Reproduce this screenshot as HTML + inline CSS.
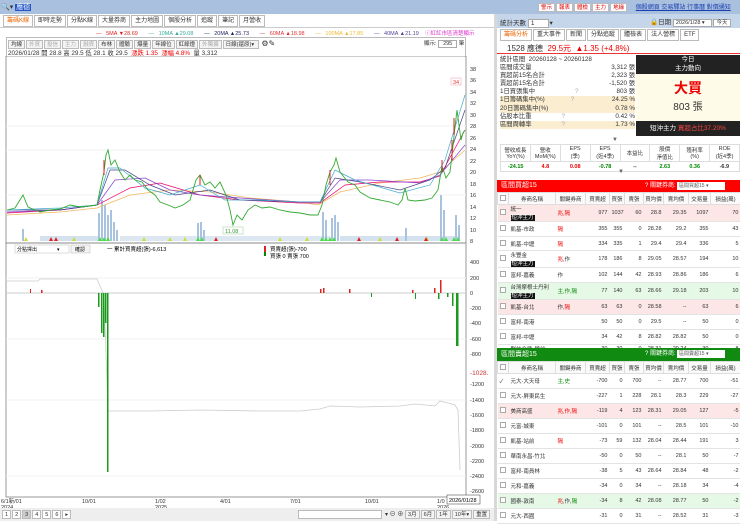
<!DOCTYPE html><html><head><meta charset="utf-8"><style>
*{margin:0;padding:0;box-sizing:border-box}
body{width:740px;height:521px;overflow:hidden;background:#fff;font-family:"Liberation Sans","Noto Sans CJK TC",sans-serif;font-size:6px;color:#333;position:relative}
.a{position:absolute}
.tab{display:inline-block;border:1px solid #bbb;padding:1px 3px;margin-right:1px;background:#fff;font-size:6px;height:12px;line-height:9px}
.btn{display:inline-block;border:1px solid #bbb;padding:0 2px;background:#f4f4f4;font-size:5.5px;height:9px;line-height:8px;margin-right:1px}
table{border-collapse:collapse;table-layout:fixed}
.t td{border-bottom:1px solid #e3e3e3;font-size:5.5px;text-align:right;padding:0 2px;white-space:nowrap;overflow:hidden}
.t td.l{text-align:left}
.t th{font-weight:normal;font-size:5.5px;border:1px solid #ddd;background:#fafafa;height:12px}
.cb{display:inline-block;width:6px;height:6px;border:1px solid #aaa;background:#fff}
.tag{background:#111;color:#fff;padding:0 1px}
.r{color:#e00}.g{color:#080}
</style></head><body>
<div class="a" style="left:0;top:0;width:740px;height:14px;background:#a9c1de"></div>
<div class="a" style="left:1px;top:2px;font-size:7px">🔍▾ <span style="background:#2456c8;color:#fff;padding:0 1px">應德</span></div>
<div class="a" style="left:538px;top:2px;font-size:6px">
<span class="btn" style="color:#d00;background:#fff">警示</span><span class="btn" style="color:#d00;background:#fff">報表</span><span class="btn" style="color:#d00;background:#fff">體檢</span><span class="btn" style="color:#d00;background:#fff">主力</span><span class="btn" style="color:#d00;background:#fff">地緣</span>
<span style="color:#1a3fb0;text-decoration:underline;margin-left:6px">個股網頁 交易驛站 行事曆 對價通知</span></div>
<div class="a" style="left:3px;top:15px"><span class="tab" style="color:#e60">籌碼K線</span><span class="tab">即時走勢</span><span class="tab">分點K線</span><span class="tab">大量券商</span><span class="tab">主力地圖</span><span class="tab">個股分析</span><span class="tab">追蹤</span><span class="tab">筆記</span><span class="tab">月營收</span></div>
<div class="a" style="left:0;top:27px;width:494px;border-top:1px solid #ccc"></div>
<div class="a" style="left:96px;top:29px;font-size:5.5px;white-space:nowrap">
<span style="color:#d22">— &nbsp; 5MA ▼28.69</span>&nbsp;&nbsp;&nbsp;&nbsp;&nbsp;&nbsp; <span style="color:#3a9">— &nbsp; 10MA ▲29.08</span>&nbsp;&nbsp;&nbsp;&nbsp;&nbsp;&nbsp; <span style="color:#226">— &nbsp; 20MA ▲25.73</span>&nbsp;&nbsp;&nbsp;&nbsp;&nbsp;&nbsp; <span style="color:#d33">— &nbsp; 60MA ▲18.98</span>&nbsp;&nbsp;&nbsp;&nbsp;&nbsp;&nbsp; <span style="color:#eb3">— &nbsp; 100MA ▲17.85</span>&nbsp;&nbsp;&nbsp;&nbsp;&nbsp;&nbsp; <span style="color:#549">— &nbsp; 40MA ▲21.19</span>&nbsp;&nbsp;&nbsp; <span style="color:#d3c">ⓘ紅紅市區清楚顯示</span></div>
<div class="a" style="left:6px;top:37px;width:460px;height:20px;border:1px solid #bbb;border-bottom:none"></div>
<div class="a" style="left:8px;top:39px"><span class="btn">均線</span><span class="btn" style="color:#aaa">外資</span><span class="btn" style="color:#aaa">投信</span><span class="btn" style="color:#aaa">主力</span><span class="btn" style="color:#aaa">融資</span><span class="btn">布林</span><span class="btn">體驗</span><span class="btn">爆量</span><span class="btn">年線位</span><span class="btn">紅綠燈</span><span class="btn" style="color:#aaa">外獨擴</span><span class="btn" style="width:36px">日線(還原)▾</span> <span style="font-size:8px">⚙✎</span></div>
<div class="a" style="left:424px;top:39px;font-size:5.5px">顯示: <span style="border:1px solid #aaa;padding:0 4px;background:#fff">295</span> 筆</div>
<div class="a" style="left:8px;top:48px;font-size:6.3px">2026/01/28 開 28.8 高 29.5 低 28.1 收 29.5 &nbsp;<span class="r">漲跌 1.35 &nbsp;漲幅 4.8%</span> &nbsp;量 3,312</div>
<svg class="a" style="left:0;top:56px" width="496" height="465" viewBox="0 56 496 465">
<rect x="6" y="56" width="460" height="441" fill="none" stroke="#999" stroke-width="1"/>
<line x1="6" y1="243" x2="466" y2="243" stroke="#888"/>
<g stroke="#f0f0f0">
<line x1="6" y1="126" x2="466" y2="126"/><line x1="6" y1="150" x2="466" y2="150"/><line x1="6" y1="195" x2="466" y2="195"/>
<line x1="6" y1="278" x2="466" y2="278"/><line x1="6" y1="339" x2="466" y2="339"/><line x1="6" y1="400" x2="466" y2="400"/><line x1="6" y1="476" x2="466" y2="476"/>
</g>
<g font-size="5.5" fill="#333">
<text x="470" y="71">38</text><text x="470" y="82">36</text><text x="470" y="94">34</text><text x="470" y="105">32</text><text x="470" y="117">30</text><text x="470" y="128">28</text><text x="470" y="140">26</text><text x="470" y="151">24</text><text x="470" y="163">22</text><text x="470" y="174">20</text><text x="470" y="186">18</text><text x="470" y="197">16</text><text x="470" y="209">14</text><text x="470" y="220">12</text><text x="470" y="232">10</text><text x="470" y="243">8</text>
<text x="470" y="264">400</text><text x="470" y="280">200</text><text x="470" y="295">0</text><text x="470" y="310">-200</text><text x="470" y="325">-400</text><text x="470" y="341">-600</text><text x="470" y="356">-800</text><text x="470" y="375" fill="#c33" font-size="6.5">-1028.</text><text x="470" y="386">-1200</text><text x="470" y="402">-1400</text><text x="470" y="417">-1600</text><text x="470" y="432">-1800</text><text x="470" y="448">-2000</text><text x="470" y="463">-2200</text><text x="470" y="478">-2400</text><text x="470" y="493">-2600</text>
<text x="1" y="503">6/1新/01</text><text x="1" y="509">2024</text><text x="82" y="503">10/01</text><text x="155" y="503">1/02</text><text x="155" y="509">2025</text><text x="220" y="503">4/01</text><text x="290" y="503">7/01</text><text x="365" y="503">10/01</text><text x="437" y="503">1/0</text><text x="437" y="509">2026</text>
</g>
<rect x="447" y="495" width="33" height="9" fill="#fff" stroke="#555" stroke-width=".6"/><text x="449" y="502" font-size="5.5">2026/01/28</text>
<rect x="451" y="78" width="10" height="7" fill="#fff" stroke="#e9a" stroke-width=".5"/><text x="453" y="84" font-size="5.5" fill="#e33">34</text>
<rect x="223" y="227" width="20" height="7" fill="#fff" stroke="#9c9" stroke-width=".5"/><text x="225" y="233" font-size="5.5" fill="#393">11.08</text>
<g fill="#a9c3de">
<rect x="22" y="229" width="2" height="12"/><rect x="98" y="213" width="2" height="28"/><rect x="101" y="200" width="2" height="41"/><rect x="104" y="205" width="2" height="36"/><rect x="107" y="215" width="2" height="26"/><rect x="110" y="210" width="2" height="31"/><rect x="113" y="222" width="2" height="19"/><rect x="116" y="230" width="2" height="11"/>
<rect x="197" y="223" width="2" height="18"/><rect x="200" y="222" width="2" height="19"/><rect x="203" y="230" width="2" height="11"/>
<rect x="322" y="212" width="2" height="29"/><rect x="325" y="220" width="2" height="21"/><rect x="331" y="218" width="2" height="23"/><rect x="334" y="215" width="2" height="26"/><rect x="337" y="222" width="2" height="19"/>
<rect x="405" y="228" width="2" height="13"/><rect x="440" y="195" width="2" height="46"/><rect x="443" y="210" width="2" height="31"/><rect x="455" y="215" width="2" height="26"/><rect x="458" y="225" width="2" height="16"/>
<rect x="40" y="236" width="60" height="5" opacity=".5"/><rect x="120" y="236" width="210" height="5" opacity=".4"/><rect x="340" y="236" width="120" height="5" opacity=".5"/>
</g>
<g fill="#4d4">
<path d="M98 241l2-4 2 4zM102 241l2-4 2 4zM106 241l2-4 2 4zM196 241l2-4 2 4zM200 241l2-4 2 4zM320 241l2-4 2 4zM324 241l2-4 2 4zM328 241l2-4 2 4zM332 241l2-4 2 4zM440 241l2-4 2 4zM444 241l2-4 2 4zM452 241l2-4 2 4zM456 241l2-4 2 4z"/>
</g>
<g fill="#cd3"><path d="M24 241l2-4 2 4zM72 241l2-4 2 4zM142 241l2-4 2 4zM168 241l2-4 2 4zM183 241l2-4 2 4zM278 241l2-4 2 4zM305 241l2-4 2 4zM378 241l2-4 2 4zM425 241l2-4 2 4z"/></g>
<g fill="#d22"><path d="M49 241l2-4 2 4zM54 241l2-4 2 4zM214 241l2-4 2 4zM357 241l2-4 2 4zM395 241l2-4 2 4zM424 241l2-4 2 4z"/></g>
<polyline fill="none" stroke="#f0b860" stroke-width=".8" points="7,215 60,212 97,208 130,195 170,190 210,192 250,198 300,202 318,205 340,192 380,183 420,178 440,172 465,150"/>
<polyline fill="none" stroke="#e06" stroke-width=".7" points="7,213 60,210 97,205 130,188 160,183 200,195 240,200 300,203 320,203 345,185 380,182 420,182 440,176 465,130"/>
<polyline fill="none" stroke="#84c" stroke-width=".7" points="7,212 60,210 97,205 115,180 145,178 170,190 200,195 240,198 300,202 320,202 340,180 370,180 420,183 440,175 465,145"/>
<polyline fill="none" stroke="#448" stroke-width=".7" points="7,210 60,210 97,205 110,170 125,170 150,185 175,195 210,190 240,200 300,202 320,202 335,178 360,182 400,190 430,180 445,168 465,110"/>
<polyline fill="none" stroke="#4ac" stroke-width=".7" points="7,210 60,208 97,205 108,168 120,168 145,188 170,195 200,185 225,200 260,200 300,202 320,202 335,170 355,180 400,193 430,185 445,160 465,95"/>
<polyline fill="none" stroke="#3a3" stroke-width=".9" points="7,210 15,208 23,195 28,207 40,212 50,210 60,209 70,205 80,207 90,206 97,205 100,190 104,172 106,155 108,150 111,165 115,160 120,172 125,180 130,175 135,180 142,182 148,190 155,195 160,202 168,205 175,208 183,205 190,200 196,180 200,175 205,185 210,182 215,188 220,182 226,195 230,210 233,225 237,215 242,220 248,210 255,205 262,208 270,207 280,210 290,212 300,213 310,215 318,215 322,205 326,185 330,172 334,165 336,158 340,172 348,182 355,185 360,192 370,198 380,200 390,202 398,205 402,200 405,188 408,200 415,201 425,200 432,198 438,190 442,166 446,178 450,172 452,155 455,127 457,110 459,125 461,140 463,133 465,130"/>
<g stroke="#d22" stroke-width="1"><line x1="104" y1="160" x2="104" y2="175"/><line x1="330" y1="170" x2="330" y2="185"/><line x1="452" y1="140" x2="452" y2="160"/><line x1="454" y1="118" x2="454" y2="135"/><line x1="200" y1="175" x2="200" y2="185"/><line x1="442" y1="160" x2="442" y2="172"/></g>
<polyline fill="none" stroke="#ccc" stroke-width=".8" points="7,281 38,281 40,279 97,279 100,286 104,295 108,411 150,411 200,410 260,411 300,411 320,409 330,406 360,407 400,406 415,404 435,406 440,401 448,403 455,405 458,410 460,470"/>
<line x1="6" y1="293" x2="466" y2="293" stroke="#ccc"/>
<g fill="#1a9a1a">
<rect x="98" y="293" width="1.5" height="14"/><rect x="101" y="293" width="1.5" height="40"/><rect x="103" y="293" width="1.5" height="44"/><rect x="105" y="293" width="1.5" height="30"/><rect x="107" y="293" width="1.5" height="179"/>
<rect x="438" y="293" width="1.5" height="6"/><rect x="447" y="293" width="1.5" height="4"/><rect x="452" y="293" width="1.5" height="13"/><rect x="456" y="293" width="2.5" height="53"/><rect x="371" y="293" width="1" height="4"/><rect x="415" y="293" width="1" height="6"/>
</g>
<g fill="#d22">
<rect x="30" y="289" width="1" height="4"/><rect x="41" y="290" width="1.5" height="3"/><rect x="320" y="289" width="1.5" height="4"/><rect x="323" y="288" width="1.5" height="5"/><rect x="349" y="289" width="1.5" height="4"/><rect x="434" y="288" width="1.5" height="5"/><rect x="440" y="280" width="1.5" height="13"/><rect x="412" y="290" width="1.5" height="3"/>
</g>
<text x="107" y="251" font-size="5.5">一 累計買賣超(張)-6,613</text>
<rect x="264" y="246" width="2" height="6" fill="#d22"/><rect x="264" y="252" width="2" height="4" fill="#080"/>
<text x="270" y="251" font-size="5.5">買賣超(張)-700</text><text x="270" y="258" font-size="5.5">買張 0 賣張 700</text>
<rect x="15" y="245" width="54" height="8" fill="#fff" stroke="#bbb" stroke-width=".5"/><text x="17" y="251" font-size="5">分點擇出　　　　▾</text>
<rect x="71" y="245" width="19" height="8" fill="#f4f4f4" stroke="#bbb" stroke-width=".5"/><text x="75" y="251" font-size="5">確認</text>
</svg>
<div class="a" style="left:0;top:508px;width:494px;height:13px;background:#eee"></div>
<div class="a" style="left:2px;top:510px"><span class="btn" style="background:#fff">1</span><span class="btn" style="background:#fff">2</span><span class="btn" style="background:#ccc">3</span><span class="btn" style="background:#fff">4</span><span class="btn" style="background:#fff">5</span><span class="btn" style="background:#fff">6</span><span class="btn" style="background:#fff">▸</span></div>
<div class="a" style="left:298px;top:510px;width:84px;height:9px;background:#fff;border:1px solid #bbb"></div>
<div class="a" style="left:385px;top:509px;font-size:6px">▾ ⊖ ⊕ <span class="btn">3月</span><span class="btn">6月</span><span class="btn">1年</span><span class="btn">10年▾</span><span class="btn">重置</span></div>
<div class="a" style="left:494px;top:14px;width:3px;height:507px;background:#d8d8d8"></div>
<div class="a" style="left:497px;top:14px;width:243px;height:14px;background:#c5d5ea"></div>
<div class="a" style="left:500px;top:17px;font-size:6.5px">統計天數 <span style="border:1px solid #aaa;background:#fff;padding:0 14px 0 2px">1</span>▾</div>
<div class="a" style="left:650px;top:16px;font-size:6.5px">🔒日期 <span style="border:1px solid #aaa;background:#fff;padding:0 6px 0 2px;font-size:5.5px">2026/1/28 ▾</span> <span style="border:1px solid #aaa;background:#fff;padding:0 2px;font-size:5.5px">今天</span></div>
<div class="a" style="left:500px;top:29px"><span class="tab" style="color:#e60">籌碼分析</span><span class="tab">重大事件</span><span class="tab">新聞</span><span class="tab">分點追蹤</span><span class="tab">體檢表</span><span class="tab">法人營標</span><span class="tab">ETF</span></div>
<div class="a" style="left:497px;top:41px;width:243px;height:13px;border-bottom:1px solid #e33"></div>
<div class="a" style="left:507px;top:43px;font-size:8px">1528 應德 &nbsp;<span class="r">29.5元 &nbsp;▲1.35 (+4.8%)</span></div>
<div class="a" style="left:500px;top:56px;width:135px;font-size:6.3px;line-height:8.1px">
<div>統計區間 &nbsp;20260128 ~ 20260128</div>
<div>區間成交量<span style="float:right">3,312 張</span></div>
<div>買超前15名合計<span style="float:right">2,323 張</span></div>
<div>賣超前15名合計<span style="float:right">-1,520 張</span></div>
<div>1日買張集中<span style="margin-left:40px;color:#aaa">?</span><span style="float:right">803 張</span></div>
<div style="background:#fbeed0">1日籌碼集中(%)<span style="margin-left:26px;color:#aaa">?</span><span style="float:right">24.25 %</span></div>
<div style="background:#fbeed0">20日籌碼集中(%)<span style="float:right">0.78 %</span></div>
<div>佔股本比重<span style="margin-left:30px;color:#aaa">?</span><span style="float:right">0.42 %</span></div>
<div style="background:#fbeed0">區間周轉率<span style="margin-left:30px;color:#aaa">?</span><span style="float:right">1.73 %</span></div>
</div>
<div class="a" style="left:636px;top:55px;width:104px;height:81px;background:#fffbe9"></div>
<div class="a" style="left:636px;top:55px;width:104px;height:19px;background:#222;color:#fff;text-align:center;font-size:6.5px;line-height:9px">今日<br>主力動向</div>
<div class="a" style="left:636px;top:78px;width:104px;text-align:center;color:#e00;font-size:14px;font-weight:bold">大買</div>
<div class="a" style="left:636px;top:98px;width:104px;text-align:center;font-size:10px">803 張</div>
<div class="a" style="left:636px;top:121px;width:104px;height:15px;background:#222;color:#fff;font-size:6.5px;line-height:15px;padding-left:14px">短沖主力 <span style="color:#f44">買超占比37.20%</span></div>
<div class="a" style="left:612px;top:137px;font-size:6px;color:#666">▼</div>
<table class="a" style="left:500px;top:144px;width:240px;border:1px solid #ddd;font-size:5.5px;text-align:center">
<tr style="height:14px"><td style="border:1px solid #ddd">營收成長<br>YoY(%)</td><td style="border:1px solid #ddd">營收<br>MoM(%)</td><td style="border:1px solid #ddd">EPS<br>(季)</td><td style="border:1px solid #ddd">EPS<br>(近4季)</td><td style="border:1px solid #ddd">本益比</td><td style="border:1px solid #ddd">股價<br>淨值比</td><td style="border:1px solid #ddd">殖利率<br>(%)</td><td style="border:1px solid #ddd">ROE<br>(近4季)</td></tr>
<tr style="height:10px;font-weight:bold"><td class="g">-24.15</td><td class="r">4.8</td><td class="r">0.08</td><td class="g">-0.78</td><td>--</td><td class="g">2.63</td><td class="g">0.36</td><td>-6.9</td></tr></table>
<div class="a" style="left:618px;top:169px;font-size:6px;color:#666">▼</div>
<div class="a" style="left:497px;top:180px;width:243px;height:12px;background:#f00;color:#fff;font-size:7px;line-height:12px;padding-left:4px">區間買超15<span style="position:absolute;left:148px;font-size:6px">? 關鍵券商:</span><span style="position:absolute;left:180px;top:2px;width:48px;height:8px;background:#fff;color:#555;font-size:5px;line-height:8px;padding-left:2px">區間買超15 ▾</span></div>
<table class="a t" style="left:497px;top:192px;width:243px">
<colgroup><col style="width:11px"><col style="width:47px"><col style="width:30px"><col style="width:24px"><col style="width:15px"><col style="width:19px"><col style="width:20px"><col style="width:25px"><col style="width:22px"><col style="width:30px"></colgroup>
<tr><th><span class="cb"></span></th><th>券商名稱</th><th>關鍵券商</th><th>買賣超</th><th>買張</th><th>賣張</th><th>買均價</th><th>賣均價</th><th>交易量</th><th>損益(萬)</th></tr>
<tr style="height:17px;background:#fde6e6"><td class="l"><span class="cb"></span></td><td class="l">統一<br><span class="tag">短沖主力</span></td><td class="l r">兆,隔</td><td>977</td><td>1037</td><td>60</td><td>28.8</td><td>29.35</td><td>1097</td><td>70</td></tr>
<tr style="height:15px"><td class="l"><span class="cb"></span></td><td class="l">凱基-市政</td><td class="l r">隔</td><td>355</td><td>355</td><td>0</td><td>28.28</td><td>29.2</td><td>355</td><td>43</td></tr>
<tr style="height:14px"><td class="l"><span class="cb"></span></td><td class="l">凱基-中壢</td><td class="l r">隔</td><td>334</td><td>335</td><td>1</td><td>29.4</td><td>29.4</td><td>336</td><td>5</td></tr>
<tr style="height:17px"><td class="l"><span class="cb"></span></td><td class="l">永豐金<br><span class="tag">短沖主力</span></td><td class="l"><span class="r">兆</span>,作</td><td>178</td><td>186</td><td>8</td><td>29.05</td><td>28.57</td><td>194</td><td>10</td></tr>
<tr style="height:15px"><td class="l"><span class="cb"></span></td><td class="l">富邦-嘉義</td><td class="l">作</td><td>102</td><td>144</td><td>42</td><td>28.93</td><td>28.86</td><td>186</td><td>6</td></tr>
<tr style="height:16px;background:#e6f8e6"><td class="l"><span class="cb"></span></td><td class="l">台灣摩根士丹利<br><span class="tag">短沖主力</span></td><td class="l g">主,作,隔</td><td>77</td><td>140</td><td>63</td><td>28.66</td><td>29.18</td><td>203</td><td>10</td></tr>
<tr style="height:15px;background:#fde6e6"><td class="l"><span class="cb"></span></td><td class="l">凱基-台北</td><td class="l">作,<span class="r">隔</span></td><td>63</td><td>63</td><td>0</td><td>28.58</td><td>--</td><td>63</td><td>6</td></tr>
<tr style="height:15px"><td class="l"><span class="cb"></span></td><td class="l">富邦-南港</td><td></td><td>50</td><td>50</td><td>0</td><td>29.5</td><td>--</td><td>50</td><td>0</td></tr>
<tr style="height:15px"><td class="l"><span class="cb"></span></td><td class="l">富邦-中壢</td><td></td><td>34</td><td>42</td><td>8</td><td>28.82</td><td>28.82</td><td>50</td><td>0</td></tr>
<tr style="height:6px"><td></td><td class="l">群益金鼎-館前</td><td></td><td>30</td><td>30</td><td>0</td><td>28.31</td><td>29.24</td><td>30</td><td>8</td></tr>
</table>
<div class="a" style="left:497px;top:348px;width:243px;height:13px;background:#108a10;color:#fff;font-size:7px;line-height:13px;padding-left:4px">區間賣超15<span style="position:absolute;left:148px;font-size:6px">? 關鍵券商:</span><span style="position:absolute;left:180px;top:2px;width:48px;height:8px;background:#fff;color:#555;font-size:5px;line-height:8px;padding-left:2px">區間賣超15 ▾</span></div>
<table class="a t" style="left:497px;top:361px;width:243px">
<colgroup><col style="width:11px"><col style="width:47px"><col style="width:30px"><col style="width:24px"><col style="width:15px"><col style="width:19px"><col style="width:20px"><col style="width:25px"><col style="width:22px"><col style="width:30px"></colgroup>
<tr><th><span class="cb"></span></th><th>券商名稱</th><th>關鍵券商</th><th>買賣超</th><th>買張</th><th>賣張</th><th>買均價</th><th>賣均價</th><th>交易量</th><th>損益(萬)</th></tr>
<tr style="height:15px"><td class="l">✓</td><td class="l">元大-大天母</td><td class="l g">主,史</td><td>-700</td><td>0</td><td>700</td><td>--</td><td>28.77</td><td>700</td><td>-51</td></tr>
<tr style="height:15px"><td class="l"><span class="cb"></span></td><td class="l">元大-屏東民生</td><td></td><td>-227</td><td>1</td><td>228</td><td>28.1</td><td>28.3</td><td>229</td><td>-27</td></tr>
<tr style="height:15px;background:#fde6e6"><td class="l"><span class="cb"></span></td><td class="l">美商高盛</td><td class="l r">兆,作,隔</td><td>-119</td><td>4</td><td>123</td><td>28.31</td><td>29.05</td><td>127</td><td>-5</td></tr>
<tr style="height:15px"><td class="l"><span class="cb"></span></td><td class="l">元富-城東</td><td></td><td>-101</td><td>0</td><td>101</td><td>--</td><td>28.5</td><td>101</td><td>-10</td></tr>
<tr style="height:15px"><td class="l"><span class="cb"></span></td><td class="l">凱基-站前</td><td class="l r">隔</td><td>-73</td><td>59</td><td>132</td><td>28.04</td><td>28.44</td><td>191</td><td>3</td></tr>
<tr style="height:15px"><td class="l"><span class="cb"></span></td><td class="l">華南永昌-竹北</td><td></td><td>-50</td><td>0</td><td>50</td><td>--</td><td>28.1</td><td>50</td><td>-7</td></tr>
<tr style="height:15px"><td class="l"><span class="cb"></span></td><td class="l">富邦-南員林</td><td></td><td>-38</td><td>5</td><td>43</td><td>28.64</td><td>28.84</td><td>48</td><td>-2</td></tr>
<tr style="height:15px"><td class="l"><span class="cb"></span></td><td class="l">元和-嘉義</td><td></td><td>-34</td><td>0</td><td>34</td><td>--</td><td>28.18</td><td>34</td><td>-4</td></tr>
<tr style="height:15px;background:#e6f8e6"><td class="l"><span class="cb"></span></td><td class="l">國泰-敦南</td><td class="l"><span class="r">兆</span>,作,<span class="g">隔</span></td><td>-34</td><td>8</td><td>42</td><td>28.08</td><td>28.77</td><td>50</td><td>-2</td></tr>
<tr style="height:15px"><td class="l"><span class="cb"></span></td><td class="l">元大-西園</td><td></td><td>-31</td><td>0</td><td>31</td><td>--</td><td>28.52</td><td>31</td><td>-3</td></tr>
</table>
</body></html>
